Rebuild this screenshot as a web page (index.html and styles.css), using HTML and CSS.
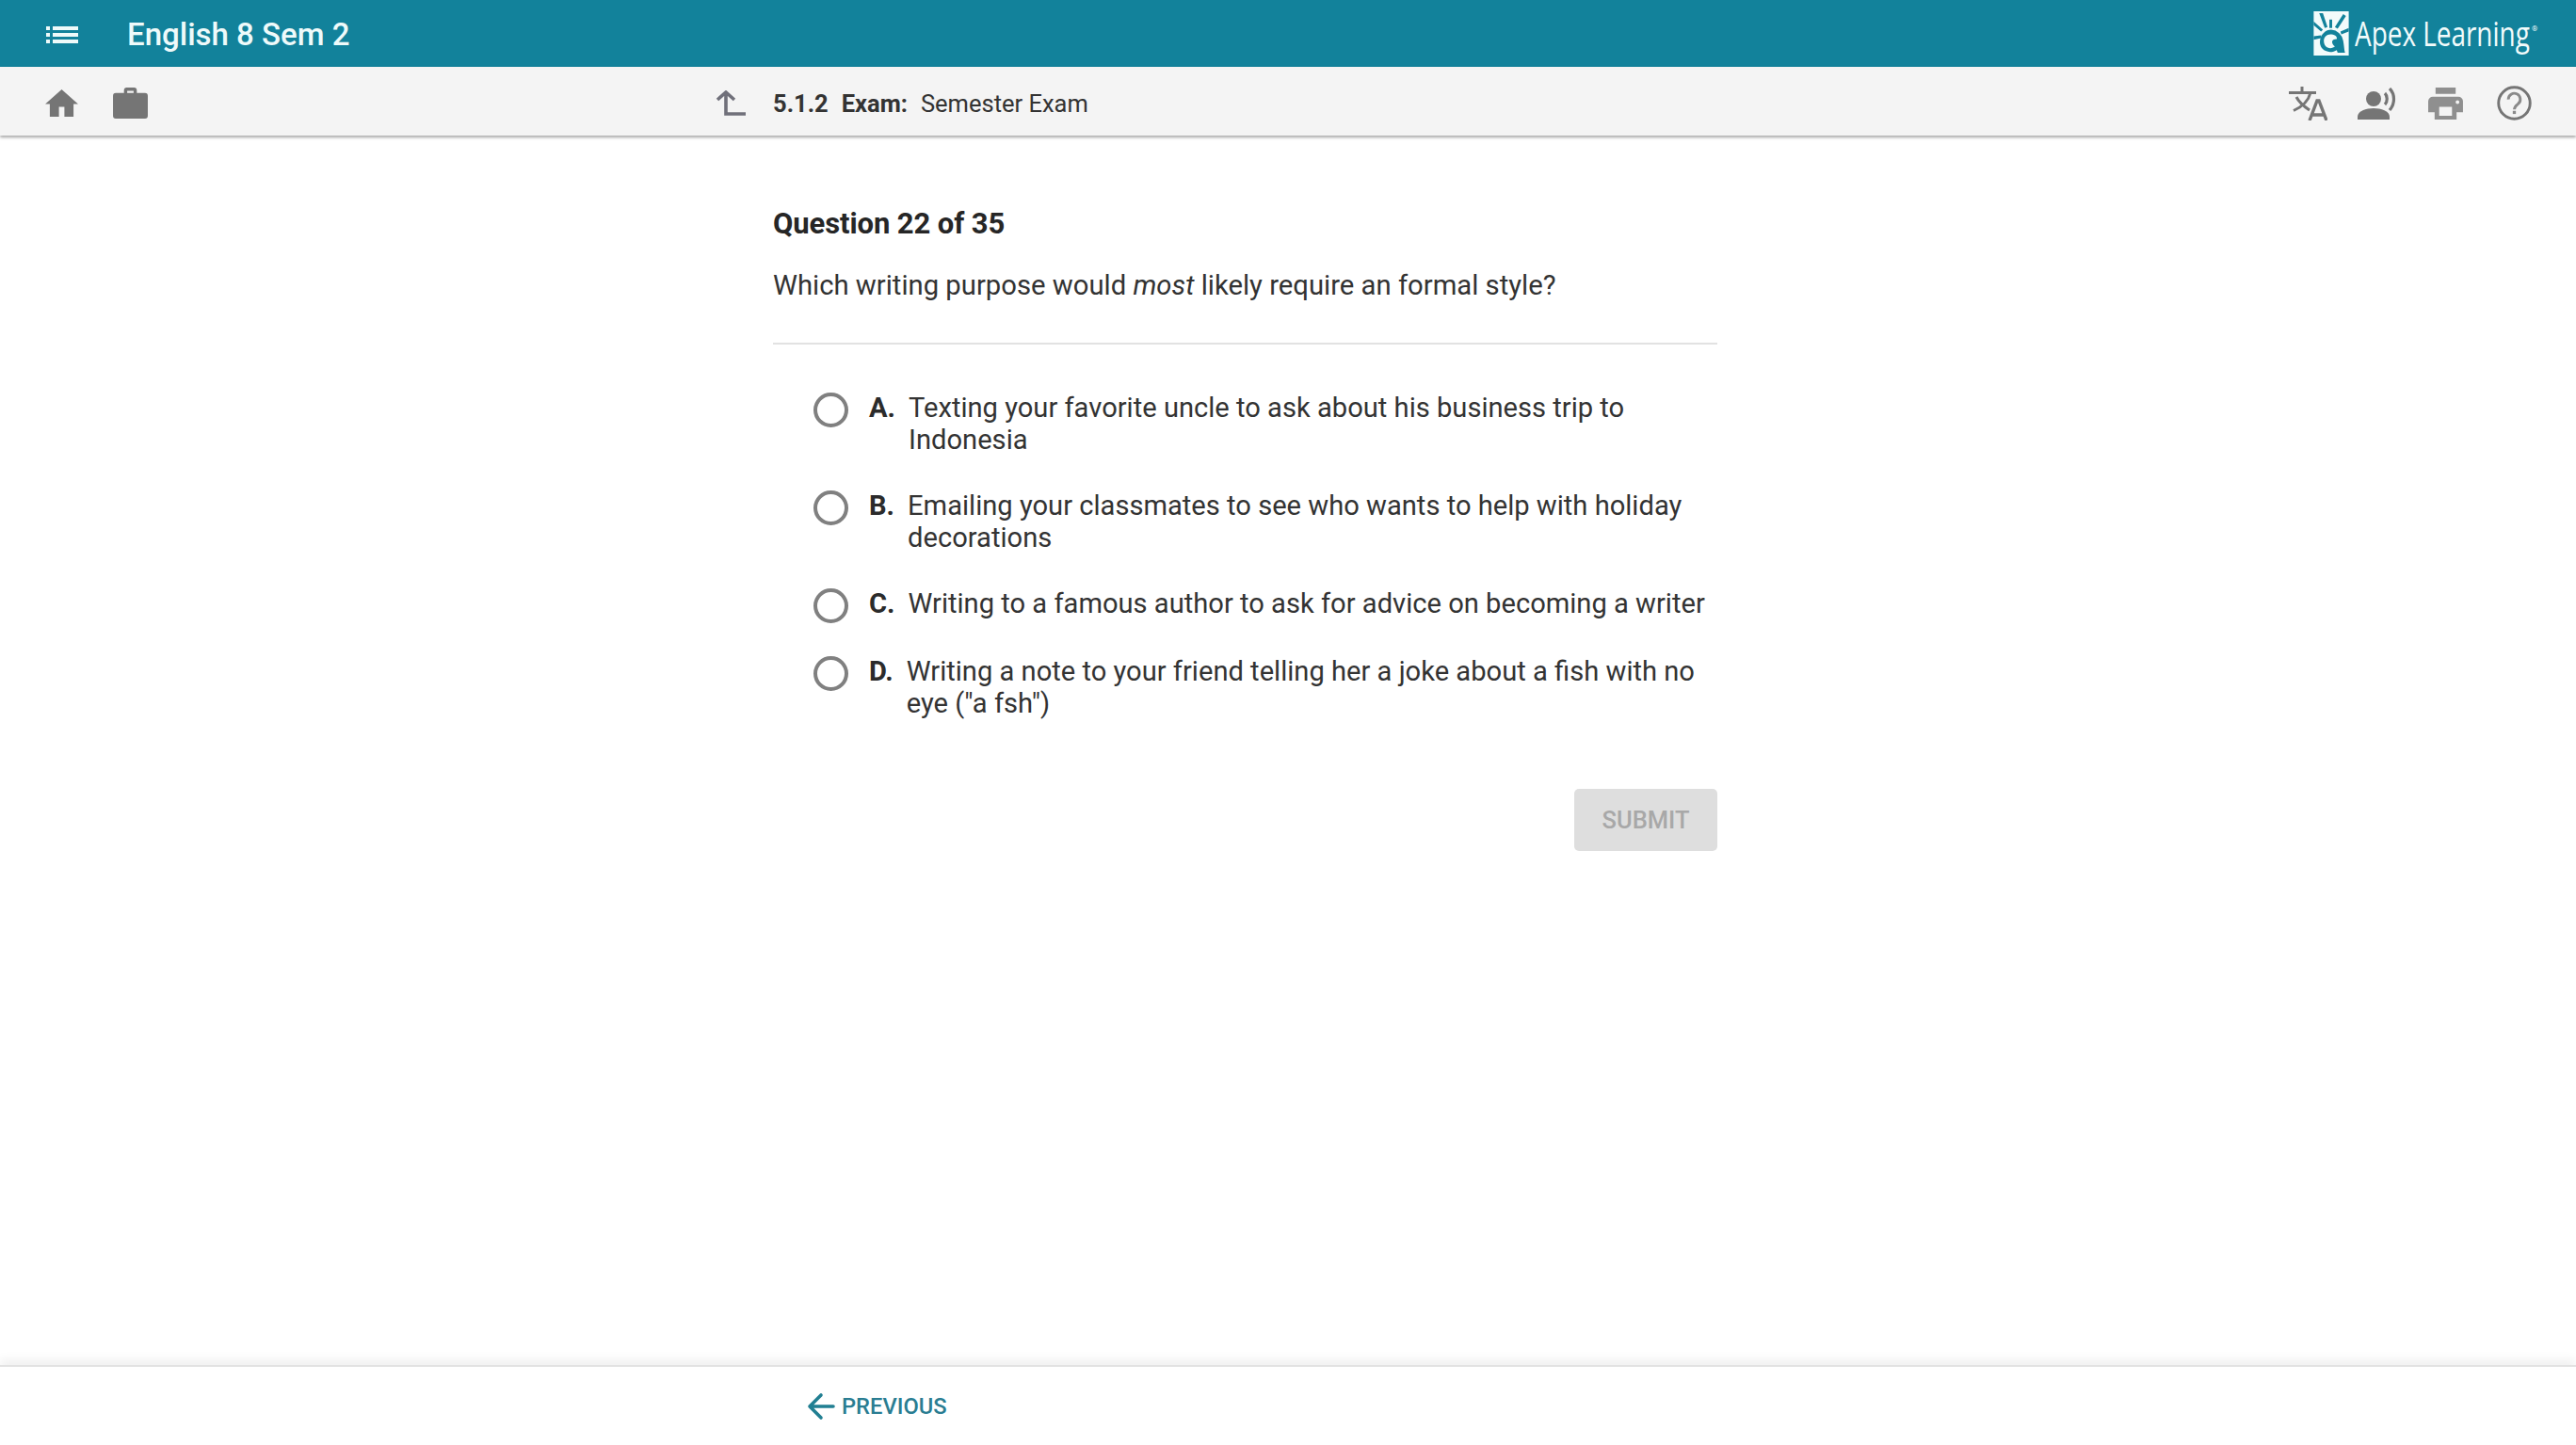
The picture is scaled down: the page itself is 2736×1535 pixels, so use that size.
FILE: index.html
```html
<!DOCTYPE html>
<html lang="en">
<head>
<meta charset="utf-8">
<title>English 8 Sem 2</title>
<link rel="stylesheet" href="styles.css">
</head>
<body>
<div class="page">
  <header class="topbar">
    <div class="topbar-left">
      <svg class="menu-icon" viewBox="0 0 34 20" aria-hidden="true"><path fill="#eefafa" d="M0 1h4v4H0zM0 8h4v4H0zM0 15h4v4H0zM7 1h27v4H7zM7 8h27v4H7zM7 15h27v4H7z"/></svg>
      <span class="course">English 8 Sem 2</span>
    </div>
    <div class="brand">
      <svg class="brand-mark" viewBox="0 0 38 48" aria-hidden="true">
        <rect width="38" height="48" fill="#f2fbfb"/>
        <g fill="#12829b">
          <path d="M6 2l4 0 5 15-3 1zM17 9h3l0 9h-3zM32 3l3 2-9 14-3-2zM0 11l10 9-2 2-8-7zM38 18v4l-8 3-1-3zM0 27l8-1 0 3-8 2z"/>
          <path fill-rule="evenodd" d="M19 20a14 14 0 0 1 13 12c1 5 1 10 2 13H26l-1-3c-3 2-8 3-12 1-5-2-7-7-6-12 1-6 6-11 12-11zm-1 5c-4 0-7 3-7 7 0 5 3 8 7 8 2 0 4-1 5-2-2-1-3-3-3-5 0-2 2-3 5-3 1-3-3-5-7-5z"/>
        </g>
      </svg>
      <span class="brand-name">Apex Learning</span><span class="brand-tm">®</span>
    </div>
  </header>

  <nav class="subbar">
    <div class="subbar-group">
      <span class="slot"><svg class="i-home" viewBox="0 0 36 32" aria-hidden="true"><path fill="#757575" d="M18 1L0 17h5v14h10V20h6v11h10V17h5z"/></svg></span>
      <span class="slot"><svg class="i-case" viewBox="0 0 38 36" aria-hidden="true"><path fill="#757575" fill-rule="evenodd" d="M12 7V4a3 3 0 0 1 3-3h8a3 3 0 0 1 3 3v3h9a3 3 0 0 1 3 3v22a3 3 0 0 1-3 3H3a3 3 0 0 1-3-3V10a3 3 0 0 1 3-3zm3.500 0h7V4.500h-7z"/></svg></span>
    </div>
    <div class="crumb">
      <svg class="up-icon" viewBox="0 0 32 28" aria-hidden="true"><path fill="none" stroke="#70707a" stroke-width="3.600" d="M2 10L11 2l9 8M11 2v23h21"/></svg>
      <span class="crumb-text"><b>5.1.2</b><b class="crumb-kind">Exam:</b>Semester Exam</span>
    </div>
    <div class="subbar-group">
      <span class="slot"><svg class="i-lang" viewBox="0 0 41 36" aria-hidden="true">
        <g fill="none" stroke="#757575" stroke-width="3">
          <path d="M0 6.500h29M14 0v6.500M23 6.500c-2 8-9 15-18 19M8 11c3 6 8 10 14 14"/>
          <path stroke-width="3.400" d="M22 36l8-21h2l8 21M25 30h13"/>
        </g>
      </svg></span>
      <span class="slot"><svg class="i-voice" viewBox="0 0 41 34" aria-hidden="true">
        <circle cx="17" cy="12" r="8" fill="#757575"/>
        <path fill="#757575" d="M0 34v-3c0-6 9-9 17-9s17 3 17 9v3z"/>
        <path fill="none" stroke="#757575" stroke-width="3.200" d="M29 6c3 3 3 9 0 12M34 1c6 6 6 16 0 23"/>
      </svg></span>
      <span class="slot"><svg class="i-print" viewBox="0 0 38 35" aria-hidden="true">
        <path fill="#8f8f8f" fill-rule="evenodd" d="M8 0h22v7H8zM5 10h28a5 5 0 0 1 5 5v12h-7v8H7v-8H0V15a5 5 0 0 1 5-5zm7 11v10h14V21zm20-7a2 2 0 1 0 0 4 2 2 0 0 0 0-4z"/>
      </svg></span>
      <span class="slot"><svg class="i-help" viewBox="0 0 38 38" aria-hidden="true">
        <circle cx="19" cy="19" r="17.200" fill="none" stroke="#757575" stroke-width="3"/>
        <path fill="none" stroke="#8a8a8a" stroke-width="3" d="M12.500 15a6.500 6.500 0 1 1 10.500 5c-2.500 2-4 3-4 6"/>
        <rect x="17.300" y="27.500" width="3.400" height="3.400" fill="#8a8a8a"/>
      </svg></span>
    </div>
  </nav>

  <main class="content">
    <h1 class="q-count">Question 22 of 35</h1>
    <p class="q-text">Which writing purpose would <em>most</em> likely require an formal style?</p>
    <hr class="rule">
    <ul class="answers">
      <li class="answer answer-a"><span class="radio"></span><b class="letter">A.</b><span class="a-text">Texting your favorite uncle to ask about his business trip to Indonesia</span></li>
      <li class="answer answer-b"><span class="radio"></span><b class="letter">B.</b><span class="a-text">Emailing your classmates to see who wants to help with holiday decorations</span></li>
      <li class="answer answer-c"><span class="radio"></span><b class="letter">C.</b><span class="a-text">Writing to a famous author to ask for advice on becoming a writer</span></li>
      <li class="answer answer-d"><span class="radio"></span><b class="letter">D.</b><span class="a-text">Writing a note to your friend telling her a joke about a fish with no eye ("a fsh")</span></li>
    </ul>
    <div class="actions"><button class="submit" type="button">SUBMIT</button></div>
  </main>

  <footer class="footer">
    <div class="footer-inner">
      <svg class="back-icon" viewBox="0 0 30 30" aria-hidden="true"><path fill="none" stroke="#217f92" stroke-width="3.600" stroke-linecap="round" stroke-linejoin="round" d="M28 15H3M15 3L3 15l12 12"/></svg>
      <span class="prev">PREVIOUS</span>
    </div>
  </footer>
</div>
</body>
</html>
```

FILE: styles.css
```css
* { box-sizing: border-box; }
html, body { margin: 0; height: 100%; }
body { font-family: Roboto, "Liberation Sans", sans-serif; color: #2b2b2b; background: #fff; }
.page { height: 1535px; display: flex; flex-direction: column; overflow: hidden; }

.topbar { height: 71px; flex: none; background: #12829b; color: #eefafa; display: flex; align-items: center; justify-content: space-between; padding: 2px 41px 0 49px; }
.topbar-left { display: flex; align-items: center; }
.menu-icon { width: 34px; height: 20px; margin-right: 52px; }
.course { font-size: 33px; font-weight: 500; }
.brand { display: flex; align-items: center; margin-top: -2px; }
.brand-mark { width: 38px; height: 47px; margin-right: 6px; }
.brand-name { font-family: "Open Sans", Roboto, sans-serif; font-size: 36px; transform: scaleX(0.775); transform-origin: left center; width: 188px; white-space: nowrap; color: #f2fbfb; }
.brand-tm { font-size: 8px; width: 6px; margin-top: -10px; }

.subbar { height: 73px; flex: none; background: #f4f4f4; position: relative; z-index: 1; box-shadow: 0 2px 3px rgba(0,0,0,.35); display: flex; align-items: center; justify-content: space-between; padding: 4px 29px 0; }
.subbar-group { display: flex; align-items: center; }
.slot { width: 73px; display: flex; justify-content: center; }
.i-home { width: 35px; height: 31px; }
.i-case { width: 37px; height: 35px; }
.i-lang { width: 41px; height: 36px; }
.i-voice { width: 41px; height: 34px; }
.i-print { width: 37px; height: 34px; }
.i-help { width: 37px; height: 37px; }
.crumb { position: absolute; left: 760px; top: 4px; bottom: 0; display: flex; align-items: center; }
.up-icon { width: 32px; height: 28px; margin-right: 29px; }
.crumb-text { font-size: 25.500px; color: #333; }
.crumb-text b { font-weight: 700; margin-right: 14px; }

.content { width: 1003px; margin-left: 821px; flex: 1; }
.q-count { font-size: 31px; font-weight: 700; margin: 75px 0 0; line-height: 38px; color: #262626; letter-spacing: -0.1px; }
.q-text { font-size: 29.250px; margin: 27px 0 0; line-height: 38px; color: #333; }
.rule { border: 0; border-top: 2px solid #e2e2e2; margin: 42px 0 0; }
.answers { list-style: none; margin: 50px 0 0; padding: 0 0 0 43px; }
.answer { display: flex; font-size: 29.130px; line-height: 34px; margin-bottom: 36px; color: #333; }
.answer-c { margin-bottom: 34px; }
.answer-d { margin-bottom: 0; }
.radio { flex: none; width: 37px; height: 37px; border: 4px solid #808080; border-radius: 50%; margin: 1px 22px 0 0; }
.letter { flex: none; margin-right: 14px; color: #2b2b2b; }
.a-text { flex: 1; }
.actions { display: flex; justify-content: flex-end; margin-top: 74px; }
.submit { width: 152px; height: 66px; border: 0; border-radius: 5px; background: #dedede; color: #a8a8a8; font: 500 25.500px Roboto, sans-serif; }

.footer { height: 85px; flex: none; background: #fff; border-top: 2px solid #e2e2e2; box-shadow: 0 -6px 10px rgba(0,0,0,.06); position: relative; }
.footer-inner { margin-left: 857px; height: 100%; display: flex; align-items: center; }
.back-icon { width: 30px; height: 30px; margin-right: 7px; }
.prev { font-size: 23.700px; font-weight: 500; color: #2a7d92; }
```
